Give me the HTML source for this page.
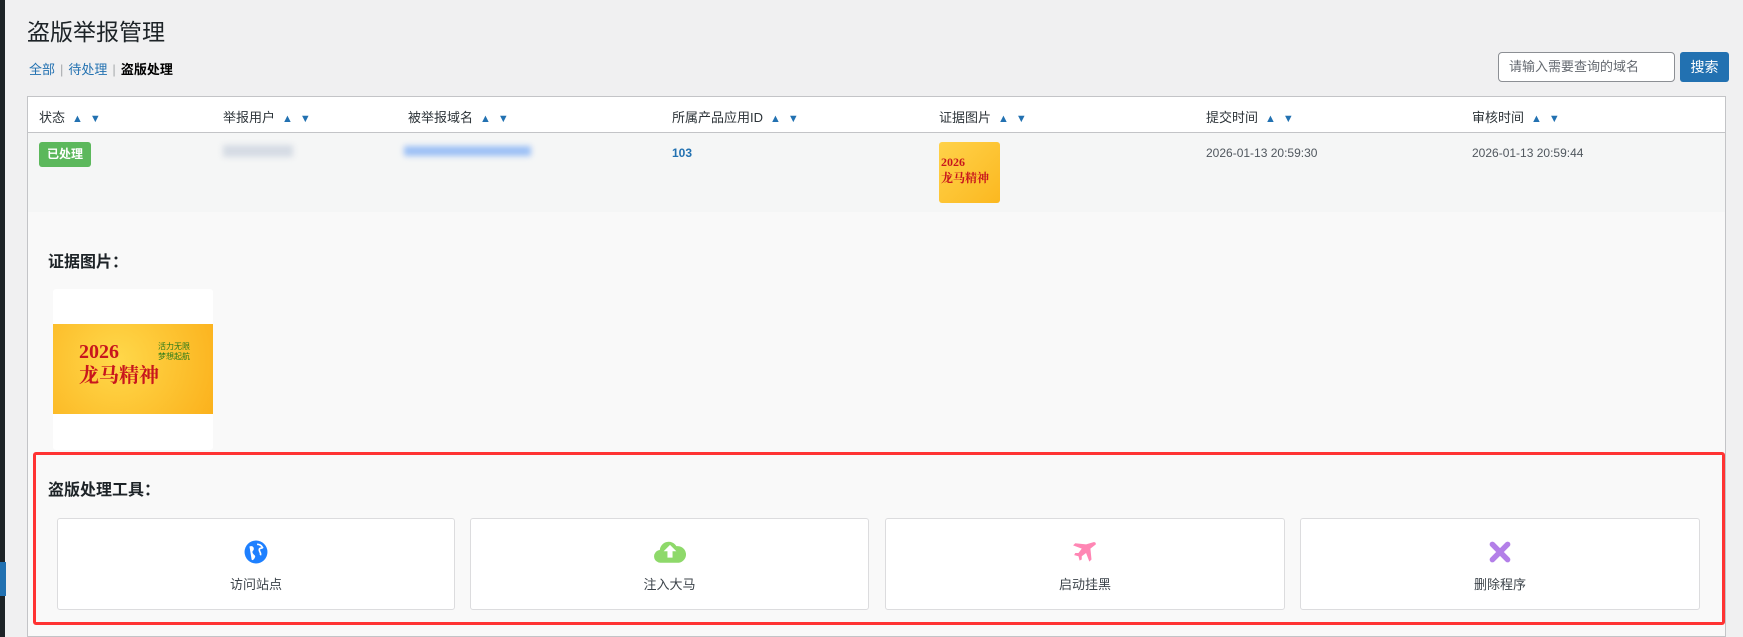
<!DOCTYPE html>
<html><head><meta charset="utf-8"><style>
*{margin:0;padding:0;box-sizing:border-box}
body{width:1743px;height:637px;background:#f0f0f1;font-family:"Liberation Sans","Noto Sans CJK SC",sans-serif;color:#3c434a;position:relative;overflow:hidden}
.a{position:absolute}
.sb{left:0;top:0;width:5px;height:637px;background:#1d2327}
h1{position:absolute;left:27px;top:13px;font-size:23px;font-weight:400;color:#1d2327}
.sub{left:29px;top:59px;font-size:13px;color:#2271b1}
.sub b{color:#000}
.sub i{font-style:normal;color:#a7aaad;margin:0 5px}
.inp{left:1498px;top:52px;width:177px;height:30px;border:1px solid #8c8f94;border-radius:4px;background:#fff;font-size:13px;color:#646970;padding:0 10px;line-height:28px}
.btn{left:1680px;top:52px;width:49px;height:30px;background:#2271b1;border-radius:3px;color:#fff;font-size:14px;text-align:center;line-height:30px}
.tbl{left:27px;top:96px;width:1699px;height:541px;border:1px solid #c3c4c7;background:#f9f9f9}
.hd{left:0;top:0;width:1697px;height:36px;background:#fff;border-bottom:1px solid #c3c4c7}
.th{top:10px;font-size:13px;color:#2c3338}
.th s{text-decoration:none;color:#2271b1;font-size:11px;margin-left:7px}
.row{left:0;top:36px;width:1697px;height:79px;background:#f5f6f6}
.badge{left:11px;top:9px;width:52px;height:25px;background:#5cb85c;border-radius:3px;color:#fff;font-weight:bold;font-size:12px;text-align:center;line-height:25px}
.td{top:13px;font-size:12px;color:#50575e}
.lbl{font-size:16px;font-weight:bold;color:#1d2327}
.red{left:33px;top:452px;width:1692px;height:173px;border:3px solid #f33;border-radius:3px}
.tool{top:518px;height:92px;background:#fff;border:1px solid #dcdcde;border-radius:3px;text-align:center;font-size:13px;color:#3c434a}
.tool svg{position:absolute;left:50%;top:21px;transform:translateX(-50%)}
.tool span{position:absolute;left:0;right:0;top:55px}
</style></head><body>
<div class="a sb"></div>
<div class="a" style="left:0;top:562px;width:6px;height:34px;background:#2271b1"></div>
<h1>盗版举报管理</h1>
<div class="a sub">全部<i>|</i>待处理<i>|</i><b>盗版处理</b></div>
<div class="a inp">请输入需要查询的域名</div>
<div class="a btn">搜索</div>
<div class="a tbl">
 <div class="a hd">
  <div class="a th" style="left:11px">状态<s>▲</s><s>▼</s></div>
  <div class="a th" style="left:195px">举报用户<s>▲</s><s>▼</s></div>
  <div class="a th" style="left:380px">被举报域名<s>▲</s><s>▼</s></div>
  <div class="a th" style="left:644px">所属产品应用ID<s>▲</s><s>▼</s></div>
  <div class="a th" style="left:911px">证据图片<s>▲</s><s>▼</s></div>
  <div class="a th" style="left:1178px">提交时间<s>▲</s><s>▼</s></div>
  <div class="a th" style="left:1444px">审核时间<s>▲</s><s>▼</s></div>
 </div>
 <div class="a row">
  <div class="a badge">已处理</div>
  <div class="a" style="left:195px;top:12px;width:70px;height:12px;background:#d5dbe4;filter:blur(3px)"></div>
  <div class="a" style="left:376px;top:13px;width:127px;height:10px;background:#9cc0f5;filter:blur(3px)"></div>
  <div class="a td" style="left:644px;color:#2271b1;font-weight:bold">103</div>
  <div class="a" style="left:911px;top:9px;width:61px;height:61px;border-radius:3px;background:linear-gradient(135deg,#ffd24a,#fbb820);overflow:hidden">
   <div style="color:#c8161d;font-weight:bold;font-size:12px;line-height:16px;margin:12px 0 0 2px;white-space:nowrap;font-family:'Liberation Serif','Noto Serif CJK SC',serif">2026<br>龙马精神</div></div>
  <div class="a td" style="left:1178px">2026-01-13 20:59:30</div>
  <div class="a td" style="left:1444px">2026-01-13 20:59:44</div>
 </div>
</div>
<div class="a lbl" style="left:48px;top:248px">证据图片：</div>
<div class="a" style="left:53px;top:289px;width:160px;height:161px;background:#fff;border-radius:3px"></div>
<div class="a" style="left:53px;top:324px;width:160px;height:90px;background:radial-gradient(circle at 40% 40%,#ffd84a,#fbb11c);overflow:hidden">
 <div style="position:absolute;left:26px;top:16px;color:#c8161d;font-weight:bold;font-size:20px;line-height:24px;font-family:'Liberation Serif','Noto Serif CJK SC',serif">2026<br>龙马精神</div>
 <div style="position:absolute;left:105px;top:18px;color:#2a7a1a;font-size:8px;line-height:10px">活力无限<br>梦想起航</div>
</div>
<div class="a red"></div>
<div class="a lbl" style="left:48px;top:476px">盗版处理工具：</div>
<div class="a tool" style="left:57px;width:398px"><svg width="24" height="24" viewBox="0 0 22 22"><circle cx="11" cy="11" r="10.5" fill="#1e80ff"/><path d="M5 6c2-1 4 0 4 2s-2 2-1 4 3 2 2 4-2 3-3 2" fill="#fff"/><path d="M12 4c2 0 4 1 5 3-1 1-3 0-3 2s2 3 1 5" fill="none" stroke="#fff" stroke-width="1.5"/></svg><span>访问站点</span></div>
<div class="a tool" style="left:470px;width:399px"><svg width="34" height="28" viewBox="0 0 26 22" style="top:17px"><path d="M6 21a5 5 0 0 1-1-10 7 7 0 0 1 13-3 6 6 0 0 1 2 13z" fill="#8ed96a"/><path d="M13 7l-5 5h3v5h4v-5h3z" fill="#fff"/></svg><span>注入大马</span></div>
<div class="a tool" style="left:885px;width:400px"><svg width="26" height="26" viewBox="0 0 24 24"><path d="M20 2c1.5 0 2 .5 2 2l-5 4 1 10-2 2-3-8-4 3 0 3-2 1-1-4-4-1 1-2 3 0 3-4-8-3 2-2 10 1z" fill="#ff86b4"/></svg><span>启动挂黑</span></div>
<div class="a tool" style="left:1300px;width:400px"><svg width="24" height="24" viewBox="0 0 22 22"><path d="M4 4l14 14M18 4L4 18" stroke="#b37fe8" stroke-width="5" stroke-linecap="round"/></svg><span>删除程序</span></div>
</body></html>
